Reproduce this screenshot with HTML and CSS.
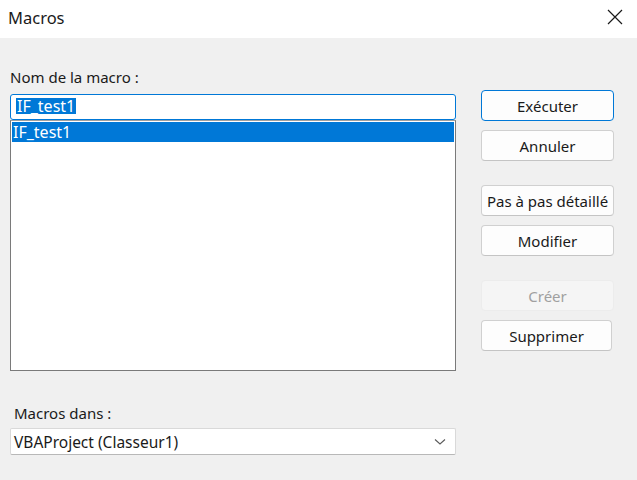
FILE: index.html
```html
<!DOCTYPE html>
<html lang="fr">
<head>
    <meta charset="UTF-8">
    <title>Macros</title>
    <link rel="stylesheet" href="styles.css">
</head>
<body>
    <div class="titlebar">
        <span class="title">Macros</span>
        <svg class="close" width="16" height="16" viewBox="0 0 16 16">
            <path d="M1 1 L15 15 M15 1 L1 15" stroke="#1a1a1a" stroke-width="1.2" fill="none"/>
        </svg>
    </div>

    <div class="dialog">
        <div class="left">
            <div class="label first">Nom de la macro :</div>
            <div class="name-input"><span class="sel">IF_test1</span></div>
            <div class="listbox">
                <div class="item selected">IF_test1</div>
            </div>
            <div class="label second">Macros dans :</div>
            <div class="combo">
                <span>VBAProject (Classeur1)</span>
                <svg class="chevron" width="12" height="8" viewBox="0 0 12 8">
                    <path d="M1 1.5 L6 6 L11 1.5" stroke="#5a5a5a" stroke-width="1.1" fill="none"/>
                </svg>
            </div>
        </div>

        <div class="buttons">
            <button class="btn default">Exécuter</button>
            <button class="btn">Annuler</button>
            <button class="btn gap">Pas à pas détaillé</button>
            <button class="btn">Modifier</button>
            <button class="btn gap disabled">Créer</button>
            <button class="btn narrow">Supprimer</button>
        </div>
    </div>
</body>
</html>
```

FILE: styles.css
```css
:root {
    --bg-color: #f0f0f0;
    --text-color: #1a1a1a;
    --accent: #0078d7;
    --border-color: #7a7a7a;
    --btn-border: #d0d0d0;
}

body {
    margin: 0;
    width: 637px;
    height: 480px;
    background-color: var(--bg-color);
    color: var(--text-color);
    font-family: "Noto Sans", "Open Sans", sans-serif;
    font-size: 15px;
    overflow: hidden;
}

.titlebar {
    height: 38px;
    background: #ffffff;
    display: flex;
    align-items: center;
    justify-content: space-between;
    padding: 0 14px 0 8px;
}

.title {
    font-size: 16.5px;
    margin-top: -4px;
}

.close {
    margin-top: -4px;
}

.dialog {
    display: flex;
    padding: 0 0 0 10px;
}

.left {
    width: 446px;
}

.label {
    height: 20px;
    line-height: 20px;
}

.label.first {
    margin-top: 29px;
    margin-bottom: 7px;
}

.label.second {
    margin-top: 32px;
    margin-bottom: 5px;
    padding-left: 4px;
}

.name-input {
    height: 26px;
    box-sizing: border-box;
    background: #ffffff;
    border: 1px solid var(--accent);
    border-radius: 3px;
    padding: 3px 0 0 5px;
    line-height: 16px;
}

.sel {
    display: inline-block;
    background: var(--accent);
    color: #ffffff;
    padding: 0 1px;
    font-size: 16px;
}

.listbox {
    height: 251px;
    box-sizing: border-box;
    background: #ffffff;
    border: 1px solid var(--border-color);
    border-top-color: #a0a0a0;
    padding: 1px;
}

.item {
    height: 20px;
    line-height: 20px;
    padding-left: 1px;
    font-size: 16px;
}

.item.selected {
    background: var(--accent);
    color: #ffffff;
}

.combo {
    height: 27px;
    box-sizing: border-box;
    background: #ffffff;
    border: 1px solid #d9d9d9;
    border-bottom-color: #b8b8b8;
    border-radius: 2px;
    display: flex;
    align-items: center;
    justify-content: space-between;
    padding: 0 9px 0 3px;
    font-size: 15.5px;
}

.buttons {
    display: flex;
    flex-direction: column;
    margin-left: 25px;
    padding-top: 52px;
}

.btn {
    width: 133px;
    height: 31px;
    box-sizing: border-box;
    margin-bottom: 9px;
    background: #fdfdfd;
    border: 1px solid var(--btn-border);
    border-bottom-color: #c4c4c4;
    border-radius: 4px;
    color: var(--text-color);
    font-family: inherit;
    font-size: 15px;
    padding: 0;
    white-space: nowrap;
}

.btn.default {
    border: 1px solid var(--accent);
}

.btn.gap {
    margin-top: 15px;
}

.btn.disabled {
    background: #f5f5f5;
    border-color: #ececec;
    color: #a0a0a0;
}

.btn.narrow {
    width: 131px;
}
```
